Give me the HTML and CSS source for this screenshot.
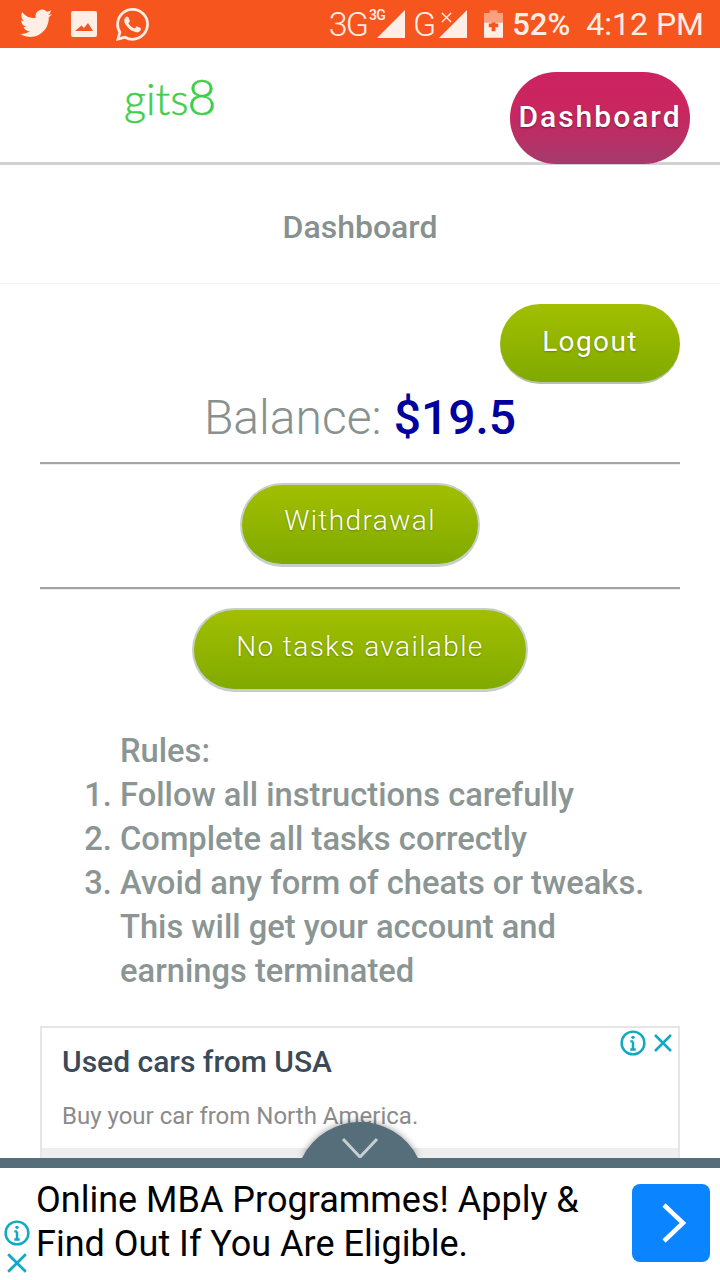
FILE: index.html
```html
<!DOCTYPE html>
<html lang="en">
<head>
    <meta charset="UTF-8">
    <meta name="viewport" content="width=device-width, initial-scale=1.0">
    <title>Dashboard</title>
    <link rel="stylesheet" href="styles.css">
</head>
<body>
    <div class="page">
        <div class="status-bar">
            <div class="status-left">
                <svg class="icon-twitter" viewBox="0 0 24 24"><path d="M23.953 4.57a10 10 0 01-2.825.775 4.958 4.958 0 002.163-3.723c-.951.555-2.005.959-3.127 1.184a4.92 4.92 0 00-8.384 4.482C7.69 8.095 4.067 6.13 1.64 3.162a4.822 4.822 0 00-.666 2.475c0 1.71.87 3.213 2.188 4.096a4.904 4.904 0 01-2.228-.616v.06a4.923 4.923 0 003.946 4.827 4.996 4.996 0 01-2.212.085 4.936 4.936 0 004.604 3.417 9.867 9.867 0 01-6.102 2.105c-.39 0-.779-.023-1.17-.067a13.995 13.995 0 007.557 2.209c9.053 0 13.998-7.496 13.998-13.985 0-.21 0-.42-.015-.63A9.935 9.935 0 0024 4.59z"/></svg>
                <svg class="icon-picture" viewBox="0 0 26 26"><path fill-rule="evenodd" d="M2 0h22a2 2 0 012 2v22a2 2 0 01-2 2H2a2 2 0 01-2-2V2a2 2 0 012-2zM4 20h18l-5-8-4 5-2.500-2.500z"/></svg>
                <svg class="icon-whatsapp" viewBox="0 0 24 24"><path d="M17.472 14.382c-.297-.149-1.758-.867-2.03-.967-.273-.099-.471-.148-.67.15-.197.297-.767.966-.94 1.164-.173.199-.347.223-.644.075-.297-.15-1.255-.463-2.39-1.475-.883-.788-1.48-1.761-1.653-2.059-.173-.297-.018-.458.13-.606.134-.133.298-.347.446-.52.149-.174.198-.298.298-.497.099-.198.05-.371-.025-.52-.075-.149-.669-1.612-.916-2.207-.242-.579-.487-.5-.669-.51-.173-.008-.371-.01-.57-.01-.198 0-.52.074-.792.372-.272.297-1.04 1.016-1.04 2.479 0 1.462 1.065 2.875 1.213 3.074.149.198 2.096 3.2 5.077 4.487.709.306 1.262.489 1.694.625.712.227 1.36.195 1.871.118.571-.085 1.758-.719 2.006-1.413.248-.694.248-1.289.173-1.413-.074-.124-.272-.198-.57-.347m-5.421 7.403h-.004a9.87 9.87 0 01-5.031-1.378l-.361-.214-3.741.982.998-3.648-.235-.374a9.86 9.86 0 01-1.51-5.26c.001-5.45 4.436-9.884 9.888-9.884 2.64 0 5.122 1.03 6.988 2.898a9.825 9.825 0 012.893 6.994c-.003 5.45-4.437 9.884-9.885 9.884m8.413-18.297A11.815 11.815 0 0012.05 0C5.495 0 .16 5.335.157 11.892c0 2.096.547 4.142 1.588 5.945L.057 24l6.305-1.654a11.882 11.882 0 005.683 1.448h.005c6.554 0 11.89-5.335 11.893-11.893a11.821 11.821 0 00-3.48-8.413z"/></svg>
            </div>
            <div class="status-right">
                <span class="net">3G</span>
                <div class="signal">
                    <span class="net-small">3G</span>
                    <svg viewBox="0 0 28 28"><path d="M28 0v28H0z"/></svg>
                </div>
                <span class="net net-g">G</span>
                <div class="signal">
                    <svg class="signal-x" viewBox="0 0 12 12"><path d="M1 1l10 10M11 1L1 11"/></svg>
                    <svg viewBox="0 0 28 28"><path d="M28 0v28H0z"/></svg>
                </div>
                <svg class="battery" viewBox="0 0 20 29"><path opacity="0.5" d="M6 0h8v3h6v10H0V3h6z"/><path fill-rule="evenodd" d="M0 13h20v16H0zM8 13v1H5v4h3v4h4v-4h3v-4h-3v-1z"/></svg>
                <span class="battery-text">52%</span>
                <span class="clock">4:12 PM</span>
            </div>
        </div>

        <div class="top-header">
            <div class="logo">gits<span class="logo-digit">8</span></div>
            <a class="btn-dashboard" href="#">Dashboard</a>
        </div>

        <div class="page-title">Dashboard</div>

        <div class="content">
            <div class="logout-row">
                <a class="btn-green btn-logout" href="#">Logout</a>
            </div>
            <div class="balance">Balance: <b>$19.5</b></div>
            <div class="divider"></div>
            <div class="btn-row">
                <a class="btn-green btn-outline btn-withdraw" href="#">Withdrawal</a>
            </div>
            <div class="divider"></div>
            <div class="btn-row">
                <a class="btn-green btn-outline btn-tasks" href="#">No tasks available</a>
            </div>

            <div class="rules">
                <div class="rules-title">Rules:</div>
                <ol>
                    <li>Follow all instructions carefully</li>
                    <li>Complete all tasks correctly</li>
                    <li>Avoid any form of cheats or tweaks. This will get your account and earnings terminated</li>
                </ol>
            </div>

            <div class="ad-card">
                <div class="ad-controls">
                    <svg class="ad-info" viewBox="0 0 24 24"><circle cx="12" cy="12" r="10.500"/><path d="M12 10.500v7.500M9.500 18h5M9.500 10.500H12"/><circle class="dot" cx="12" cy="6.800" r="1.600"/></svg>
                    <svg class="ad-close" viewBox="0 0 20 20"><path d="M2 2l16 16M18 2L2 18"/></svg>
                </div>
                <div class="ad-title">Used cars from USA</div>
                <div class="ad-sub">Buy your car from North America.</div>
                <div class="ad-strip"></div>
            </div>
        </div>

        <div class="bottom-ad">
            <svg class="collapse-tab" viewBox="0 0 116 36">
                <path class="tab-shape" d="M0 36A64.700 64.700 0 0 1 116 36z"/>
                <path class="tab-chevron" d="M41 17l17 18L75 17"/>
            </svg>
            <div class="collapse-bar"></div>
            <div class="bottom-body">
                <div class="bottom-controls">
                    <svg class="ad-info" viewBox="0 0 24 24"><circle cx="12" cy="12" r="10.500"/><path d="M12 10.500v7.500M9.500 18h5M9.500 10.500H12"/><circle class="dot" cx="12" cy="6.800" r="1.600"/></svg>
                    <svg class="ad-close" viewBox="0 0 20 20"><path d="M2 2l16 16M18 2L2 18"/></svg>
                </div>
                <div class="bottom-text">Online MBA Programmes! Apply &amp; Find Out If You Are Eligible.</div>
                <a class="bottom-go" href="#">
                    <svg viewBox="0 0 26 42"><path d="M3 3l19 18L3 39"/></svg>
                </a>
            </div>
        </div>
    </div>
</body>
</html>
```

FILE: styles.css
```css
* {
    box-sizing: border-box;
}
body {
    font-family: Roboto, "Liberation Sans", sans-serif;
    margin: 0;
    background-color: #fff;
}
a {
    text-decoration: none;
}
.page {
    position: relative;
    height: 1280px;
    overflow: hidden;
}
.status-bar {
    height: 48px;
    background-color: #f6551e;
    color: #ffeee6;
    fill: #ffeee6;
    display: flex;
    justify-content: space-between;
    align-items: center;
    padding: 0 16px 0 20px;
}
.status-left {
    display: flex;
    align-items: center;
}
.icon-twitter {
    width: 32px;
    height: 32px;
    margin-right: 19px;
}
.icon-picture {
    width: 26px;
    height: 26px;
    margin-right: 19px;
}
.icon-whatsapp {
    width: 33px;
    height: 33px;
}
.status-right {
    display: flex;
    align-items: center;
}
.net {
    font-size: 34px;
    font-weight: 300;
    letter-spacing: -2px;
    margin-right: 10px;
}
.net-g {
    margin-left: 8px;
    margin-right: 5px;
}
.signal {
    position: relative;
    width: 28px;
    height: 28px;
}
.signal > svg {
    display: block;
    width: 28px;
    height: 28px;
}
.net-small {
    position: absolute;
    left: -8px;
    top: -3px;
    font-size: 14px;
    line-height: 16px;
    font-weight: 500;
    letter-spacing: -0.500px;
}
.signal > .signal-x {
    position: absolute;
    left: 2px;
    top: 2px;
    width: 11px;
    height: 11px;
    stroke: #ffeee6;
    stroke-width: 1.500;
    fill: none;
}
.battery {
    width: 19px;
    height: 28px;
    margin: 0 9px 0 17px;
}
.battery-text {
    font-size: 31px;
    font-weight: 500;
}
.clock {
    font-size: 32px;
    margin-left: 16px;
}
.top-header {
    height: 117px;
    display: flex;
    justify-content: space-between;
    padding: 21px 30px 0 124px;
    border-bottom: 3px solid #d2d2d2;
}
.logo {
    font-family: Lato, sans-serif;
    font-weight: 300;
    font-size: 43px;
    line-height: 54px;
    color: #3ecf4a;
    -webkit-text-stroke: 0.5px #3ecf4a;
}
.logo-digit {
    font-size: 50px;
    margin-left: -1px;
}
.btn-dashboard {
    width: 180px;
    height: 92px;
    margin-top: 3px;
    padding-bottom: 4px;
    border-radius: 46px;
    background: linear-gradient(#cc2360, #c9265f 45%, #a53a6c);
    color: #fff;
    font-size: 30px;
    font-weight: 500;
    letter-spacing: 2px;
    text-shadow: 0 1px 2px rgba(0,0,0,0.4);
    display: flex;
    justify-content: center;
    align-items: center;
}
.page-title {
    height: 119px;
    padding-top: 6px;
    display: flex;
    justify-content: center;
    align-items: center;
    font-size: 32px;
    font-weight: 500;
    color: #87918f;
    border-bottom: 1px solid #f4f4f4;
}
.content {
    padding: 20px 40px 0;
}
.logout-row {
    display: flex;
    justify-content: flex-end;
}
.btn-row {
    display: flex;
    justify-content: center;
    margin: 18px 0 20px;
}
.btn-green {
    display: flex;
    justify-content: center;
    align-items: center;
    border-radius: 42px;
    background: linear-gradient(#a2bf00, #80aa00);
    color: #fff;
    font-size: 28px;
    font-weight: 300;
    letter-spacing: 1.400px;
    text-shadow: 0 1px 2px rgba(0,0,0,0.25);
}
.btn-logout {
    width: 180px;
    height: 80px;
    padding-bottom: 4px;
    font-weight: 400;
    border-bottom: 2px solid #b9c2ad;
}
.btn-outline {
    height: 84px;
    padding-bottom: 9px;
    border: 2px solid #c6cfca;
    border-bottom-width: 3px;
}
.btn-withdraw {
    width: 240px;
}
.btn-tasks {
    width: 336px;
    padding-bottom: 7px;
}
.balance {
    height: 78px;
    padding-bottom: 12px;
    display: flex;
    justify-content: center;
    align-items: center;
    gap: 12px;
    font-size: 48px;
    font-weight: 300;
    color: #87918f;
}
.balance b {
    color: #00009c;
    font-weight: 500;
}
.divider {
    height: 3px;
    background-color: #a4a4a4;
    border-bottom: 1px solid #eeeeee;
}
.rules {
    margin-top: 37px;
    color: #8a9594;
    font-size: 32.700px;
    font-weight: 500;
    line-height: 44px;
}
.rules-title {
    padding-left: 80px;
}
.rules ol {
    margin: 0;
    padding-left: 80px;
}
.ad-card {
    position: relative;
    margin-top: 33px;
    height: 240px;
    border: 2px solid #e6e6e6;
    padding: 16px 20px 0;
}
.ad-controls {
    position: absolute;
    top: 2px;
    right: 5px;
    display: flex;
    align-items: center;
    gap: 7px;
}
.ad-info {
    width: 26px;
    height: 26px;
    stroke: #10a8c4;
    stroke-width: 2.300;
    fill: none;
}
.ad-info .dot {
    fill: #10a8c4;
    stroke: none;
}
.ad-close {
    width: 20px;
    height: 20px;
    stroke: #10a8c4;
    stroke-width: 2.500;
    fill: none;
}
.ad-title {
    font-size: 30px;
    font-weight: 500;
    line-height: 36px;
    color: #3a4a58;
}
.ad-sub {
    margin-top: 21px;
    font-size: 24px;
    line-height: 30px;
    color: #8b8b8b;
}
.ad-strip {
    margin: 17px -20px 0;
    height: 60px;
    background-color: #eeeeee;
}
.bottom-ad {
    position: absolute;
    left: 0;
    right: 0;
    bottom: 0;
    background-color: #fff;
}
.collapse-tab {
    position: absolute;
    left: 302px;
    top: -36px;
    width: 116px;
    height: 36px;
    overflow: visible;
}
.tab-shape {
    fill: #566d7a;
    filter: drop-shadow(0 -1px 3px rgba(0,0,0,0.35));
}
.tab-chevron {
    stroke: #c5ced2;
    stroke-width: 3;
    fill: none;
}
.collapse-bar {
    position: relative;
    height: 10px;
    background-color: #566d7a;
}
.bottom-body {
    position: relative;
    height: 112px;
    display: flex;
    padding: 10px 10px 0 36px;
}
.bottom-controls {
    position: absolute;
    left: 4px;
    bottom: 6px;
    display: flex;
    flex-direction: column;
    align-items: center;
    gap: 6px;
}
.bottom-controls .ad-close {
    width: 22px;
    height: 22px;
}
.bottom-text {
    width: 560px;
    font-size: 36px;
    line-height: 44px;
    color: #000;
}
.bottom-go {
    position: absolute;
    right: 10px;
    top: 16px;
    width: 78px;
    height: 78px;
    padding-left: 5px;
    border-radius: 8px;
    background-color: #0a84ff;
    display: flex;
    justify-content: center;
    align-items: center;
}
.bottom-go svg {
    width: 26px;
    height: 42px;
    stroke: #fff;
    stroke-width: 4.500;
    fill: none;
}
```
